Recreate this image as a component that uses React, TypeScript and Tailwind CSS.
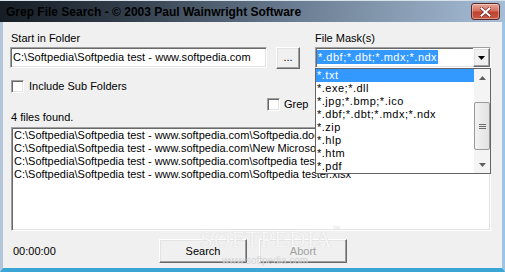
import React from "react";

const sunken =
  "border border-t-[#a0a0a0] border-l-[#a0a0a0] border-b-white border-r-white shadow-[inset_1px_1px_0_#696969,inset_-1px_-1px_0_#e3e3e3]";
const raised =
  "border border-t-white border-l-white border-b-[#696969] border-r-[#696969] shadow-[inset_-1px_-1px_0_#a0a0a0,inset_1px_1px_0_#e3e3e3] bg-[#f0f0f0]";

const masks = [
  "*.txt",
  "*.exe;*.dll",
  "*.jpg;*.bmp;*.ico",
  "*.dbf;*.dbt;*.mdx;*.ndx",
  "*.zip",
  "*.hlp",
  "*.htm",
  "*.pdf",
];

const results = [
  "C:\\Softpedia\\Softpedia test - www.softpedia.com\\Softpedia.doc",
  "C:\\Softpedia\\Softpedia test - www.softpedia.com\\New Microsoft Word Document.docx",
  "C:\\Softpedia\\Softpedia test - www.softpedia.com\\softpedia test.txt",
  "C:\\Softpedia\\Softpedia test - www.softpedia.com\\Softpedia tester.xlsx",
];

function Checkbox() {
  return <div className={`h-[13px] w-[13px] bg-white ${sunken}`} />;
}

export default function App() {
  return (
    <div className="flex h-[272px] w-[505px] flex-col overflow-hidden bg-[#f0f0f0] font-['Liberation_Sans',sans-serif] text-[11px] text-black">
      {/* Title bar */}
      <div className="flex h-[22px] shrink-0 items-center border-t border-t-[#d8e2ec] bg-[linear-gradient(to_right,#161d24_0%,#323e4b_25%,#6a7c91_58%,#a6bdd6_100%)] pl-[6px] pr-[5px]">
        <div className="flex-1 text-[12px] font-bold leading-[16px] text-black">
          Grep File Search - © 2003 Paul Wainwright Software
        </div>
        <div className="flex h-[17px] w-[29px] items-center justify-center rounded-[3px] border border-[#5a2a2a] bg-[linear-gradient(to_bottom,#e9a99a_0%,#d4705e_45%,#c0432e_55%,#c85a45_100%)] shadow-[inset_0_0_0_1px_rgba(255,255,255,0.35)]">
          <svg width="11" height="10" viewBox="0 0 11 10">
            <path d="M1.5 1.5 L9.5 8.5 M9.5 1.5 L1.5 8.5" stroke="#5a2020" strokeWidth="3.2" strokeLinecap="square" />
            <path d="M1.5 1.5 L9.5 8.5 M9.5 1.5 L1.5 8.5" stroke="#ffffff" strokeWidth="2" strokeLinecap="square" />
          </svg>
        </div>
      </div>

      {/* Client area with frame */}
      <div className="relative flex flex-1 flex-col border-b-[4px] border-l-[3px] border-r-[3px] border-b-[#3aa6d6] border-l-[#b3c6d9] border-r-[#9cc4e6] pl-[7px]">
        <div className="mt-[10px] flex h-[13px] leading-[13px]">
          <div className="w-[305px] pl-[1px]">Start in Folder</div>
          <div>File Mask(s)</div>
        </div>

        <div className="mt-[2px] flex h-[21px]">
          <div className={`flex w-[257px] items-center bg-white pl-[2px] tracking-[0.05px] ${sunken}`}>
            C:\Softpedia\Softpedia test - www.softpedia.com
          </div>
          <div className={`ml-[9px] flex h-[22px] w-[24px] items-center justify-center pb-[2px] ${raised}`}>
            ...
          </div>
          <div className={`ml-[15px] flex h-[21px] w-[176px] items-center bg-white pl-[1px] ${sunken}`}>
            <div className="flex-1">
              <span className="bg-[#3399ff] px-[1px] py-[1px] tracking-[0.5px] text-white">*.dbf;*.dbt;*.mdx;*.ndx</span>
            </div>
            <div className={`flex h-[19px] w-[17px] items-center justify-center ${raised}`}>
              <svg width="7" height="4" viewBox="0 0 7 4">
                <path d="M0 0 H7 L3.5 4 Z" fill="#000" />
              </svg>
            </div>
          </div>
        </div>

        <div className="mt-[12px] flex h-[13px] items-center">
          <div className="ml-[1px]">
            <Checkbox />
          </div>
          <div className="ml-[5px] leading-[13px]">Include Sub Folders</div>
        </div>

        <div className="mt-[5px] flex h-[13px] items-center">
          <div className="ml-[257px]">
            <Checkbox />
          </div>
          <div className="ml-[4px] leading-[13px]">Grep</div>
        </div>

        <div className="ml-[1px] mt-[0px] h-[13px] leading-[13px]">4 files found.</div>

        <div className={`ml-[1px] mt-[3px] h-[104px] w-[480px] overflow-hidden bg-white pl-[2px] pt-[1px] ${sunken}`}>
          {results.map((r) => (
            <div key={r} className="h-[13px] whitespace-nowrap leading-[13px]">
              {r}
            </div>
          ))}
        </div>

        <div className="mt-[8px] flex h-[24px] items-center">
          <div className="w-[149px] pl-[3px]">00:00:00</div>
          <div className={`flex h-[24px] w-[88px] items-center justify-center ${raised}`}>Search</div>
          <div className={`ml-[12px] flex h-[24px] w-[88px] items-center justify-center text-[#a0a0a0] ${raised}`}>
            Abort
          </div>
        </div>

        {/* Watermark */}
        <div className="pointer-events-none absolute left-[197px] top-[206px] font-['Liberation_Serif',serif] text-[23px] leading-[23px] tracking-[1px] text-[#f6f6f6] [text-shadow:0_0_1px_#c8c8c8]">
          SOFTPEDIA
          <span className="absolute -right-[8px] -top-[2px] text-[7px] leading-[7px]">™</span>
        </div>
        <div className="pointer-events-none absolute left-[219px] top-[234px] text-[10px] leading-[10px] text-[#d4d4d4]">
          www.softpedia.com
        </div>

        {/* Dropdown list overlay */}
        <div className="absolute left-[312px] top-[46px] flex h-[106px] w-[176px] border border-[#646464] bg-white">
          <div className="flex-1 overflow-hidden">
            {masks.map((m, i) => (
              <div
                key={m}
                className={`h-[13px] whitespace-nowrap pl-[1px] leading-[13px] tracking-[0.5px] ${i === 0 ? "bg-[#3399ff] text-white" : ""}`}
              >
                {m}
              </div>
            ))}
          </div>
          <div className="flex w-[16px] flex-col bg-[#f4f4f4]">
            <div className="flex h-[17px] items-center justify-center">
              <svg width="7" height="4" viewBox="0 0 7 4">
                <path d="M3.5 0 L7 4 H0 Z" fill="#606060" />
              </svg>
            </div>
            <div className="mt-[16px] flex h-[48px] flex-col items-center justify-center rounded-[2px] border border-[#9a9a9a] bg-[linear-gradient(to_right,#f2f2f2,#e2e2e2)]">
              <div className="mb-[1px] h-[1px] w-[7px] bg-[#6c6c6c]" />
              <div className="mb-[1px] h-[1px] w-[7px] bg-[#6c6c6c]" />
              <div className="h-[1px] w-[7px] bg-[#6c6c6c]" />
            </div>
            <div className="flex flex-1 items-end justify-center pb-[6px]">
              <svg width="7" height="4" viewBox="0 0 7 4">
                <path d="M0 0 H7 L3.5 4 Z" fill="#606060" />
              </svg>
            </div>
          </div>
        </div>
      </div>
    </div>
  );
}
